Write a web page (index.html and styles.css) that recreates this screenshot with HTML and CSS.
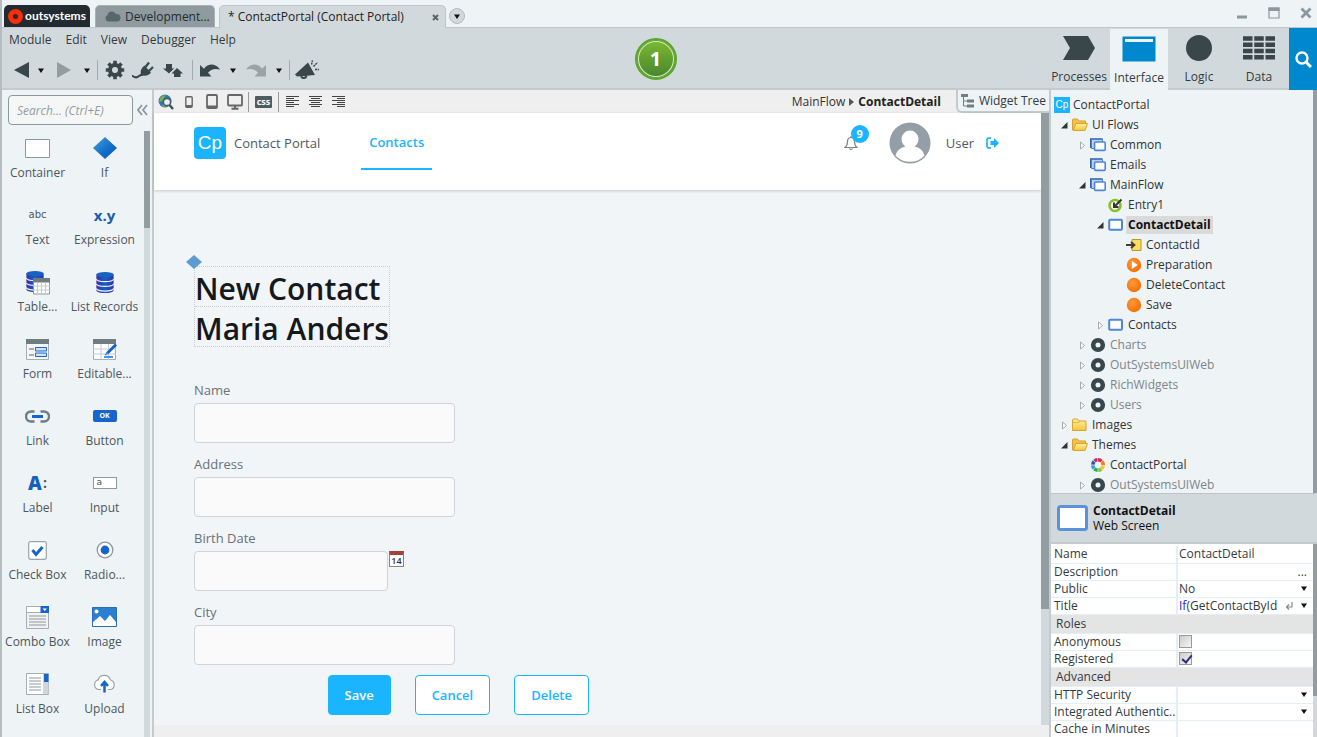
FILE: index.html
```html
<!DOCTYPE html>
<html lang="en">
<head>
<meta charset="utf-8">
<title>ContactPortal (Contact Portal)</title>
<link rel="stylesheet" href="styles.css">
</head>
<body>
<svg class="defs" width="0" height="0" aria-hidden="true">
  <defs>
    <linearGradient id="gBlue" x1="0" y1="0" x2="1" y2="1"><stop offset="0" stop-color="#4aa0e0"/><stop offset=".6" stop-color="#0f6cc8"/><stop offset="1" stop-color="#0a5fc0"/></linearGradient>
    <linearGradient id="gDb" x1="0" y1="0" x2="1" y2="0"><stop offset="0" stop-color="#3b2ea6"/><stop offset=".5" stop-color="#1560c4"/><stop offset="1" stop-color="#3b2ea6"/></linearGradient>
    <linearGradient id="gFold" x1="0" y1="0" x2="0" y2="1"><stop offset="0" stop-color="#fff0a0"/><stop offset="1" stop-color="#f3c63c"/></linearGradient>
    <radialGradient id="gOrange" cx=".4" cy=".35" r=".7"><stop offset="0" stop-color="#ff9a3c"/><stop offset="1" stop-color="#f26c00"/></radialGradient>
    <symbol id="open" viewBox="0 0 7 7"><path d="M6.5 0v6.500H0z" fill="#333"/></symbol>
    <symbol id="closed" viewBox="0 0 7 9"><path d="M1.500 1v7l4-3.500z" fill="#fff" stroke="#a8a8a8"/></symbol>
    <symbol id="folder-open" viewBox="0 0 16 16"><path d="M.5 13V3q0-1 1-1h4l1 2h7v3" fill="#f2c14a" stroke="#d9a02a"/><path d="M1 13.500L4 6.500h11.500L13 13.500z" fill="url(#gFold)" stroke="#dba32a"/></symbol>
    <symbol id="folder" viewBox="0 0 16 16"><path d="M.5 13.500V3q0-1 1-1h4l1 2h7.500v9.500z" fill="url(#gFold)" stroke="#dba32a"/><path d="M1 5.500h6l1-1.500" fill="none" stroke="#e5b84a"/></symbol>
    <symbol id="flow" viewBox="0 0 16 16"><path d="M1 11V2.200h11.500" fill="none" stroke="#2f62a8" stroke-width="2"/><path d="M1.500 2.500h11v9h-11z" fill="#b9d0ee" stroke="#4a80c8"/><rect x="4.600" y="5" width="10.600" height="8.400" rx="1" fill="#fff" stroke="#4f87d6" stroke-width="1.600"/></symbol>
    <symbol id="screen" viewBox="0 0 16 16"><rect x="1.200" y="2.800" width="12.800" height="10" rx="1" fill="#fff" stroke="#4f87d6" stroke-width="2"/></symbol>
    <symbol id="entry" viewBox="0 0 16 16"><circle cx="7" cy="8.500" r="5.500" fill="#fff" stroke="#84bf2c" stroke-width="2.600"/><path d="M13.500 2.500L7 9M6 5.500v4.500h4.500" fill="none" stroke="#333" stroke-width="2"/></symbol>
    <symbol id="param" viewBox="0 0 16 16"><path d="M6 2.500h9v11H6z" fill="#fbdc62" stroke="#b7972f"/><path d="M0 8h8M5 5L8.500 8 5 11" fill="none" stroke="#4a3a2a" stroke-width="1.800"/></symbol>
    <symbol id="action" viewBox="0 0 16 16"><circle cx="8" cy="8" r="7.200" fill="url(#gOrange)"/></symbol>
    <symbol id="prep" viewBox="0 0 16 16"><circle cx="8" cy="8" r="7.200" fill="url(#gOrange)"/><path d="M5.800 4v8l6-4z" fill="#fff"/></symbol>
    <symbol id="module" viewBox="0 0 16 16"><circle cx="8" cy="8" r="4.800" fill="#eef3f5" stroke="#37474b" stroke-width="4.600"/></symbol>
    <symbol id="theme" viewBox="0 0 16 16"><g fill="none" stroke-width="3.600"><path d="M8 2.800a5.200 5.200 0 0 1 3.600 1.500" stroke="#d6324a"/><path d="M12 4.700A5.200 5.200 0 0 1 13.200 8" stroke="#f07c1c"/><path d="M13.200 8.600A5.200 5.200 0 0 1 11.600 11.700" stroke="#f4c81c"/><path d="M11.200 12A5.200 5.200 0 0 1 8.200 13.200" stroke="#8bc53f"/><path d="M7.600 13.200A5.200 5.200 0 0 1 4.400 11.800" stroke="#2ca54a"/><path d="M4 11.300A5.200 5.200 0 0 1 2.800 8.300" stroke="#2b9fd8"/><path d="M2.800 7.700A5.200 5.200 0 0 1 4.100 4.500" stroke="#3c4fb4"/><path d="M4.500 4.100A5.200 5.200 0 0 1 7.500 2.800" stroke="#c02a6c"/></g></symbol>
    <symbol id="down" viewBox="0 0 6 5"><path d="M0 .5h6L3 5z" fill="#111"/></symbol>
    <symbol id="db" viewBox="0 0 20 24"><path d="M1 3.500v16.500c0 1.800 4 3 9 3s9-1.200 9-3V3.500z" fill="url(#gDb)"/><ellipse cx="10" cy="3.800" rx="9" ry="2.800" fill="#1762c2"/><path d="M1 8.500c1 3.500 17 3.500 18 0M1 13.500c1 3.500 17 3.500 18 0M1 18.300c1 3.500 17 3.500 18 0" stroke="#eef3f5" stroke-width="1.300" fill="none"/></symbol>
  </defs>
</svg>

<div class="app">
  <header class="titlebar">
    <div class="tab brand">
      <svg width="15" height="15" viewBox="0 0 15 15"><circle cx="7.500" cy="7.500" r="5" fill="#222b2f" stroke="#fb2c0a" stroke-width="5"/></svg>
      <span>outsystems</span>
    </div>
    <button class="tab env"><svg width="17" height="11" viewBox="0 0 17 11"><path d="M4 10.500a3.500 3.500 0 0 1-.5-6.500 4.500 4.500 0 0 1 8.500-.8 3.700 3.700 0 0 1 1.500 7.300z" fill="#58676c"/></svg><span>Development...</span></button>
    <div class="tab current"><span>* ContactPortal (Contact Portal)</span>
      <button class="close" aria-label="Close tab"><svg width="7" height="7" viewBox="0 0 7 7"><path d="M1 1l5 5M6 1L1 6" stroke="#5a6468" stroke-width="2"/></svg></button></div>
    <button class="tab-list" aria-label="Open tabs"><svg width="6" height="5"><use href="#down"/></svg></button>
    <div class="window-buttons">
      <button aria-label="Minimize"><svg width="12" height="12" viewBox="0 0 12 12"><path d="M1 8.500h10v3H1z" fill="#8b989d"/></svg></button>
      <button aria-label="Maximize"><svg width="12" height="12" viewBox="0 0 12 12"><path d="M1 1h10v10H1z" fill="none" stroke="#8b989d" stroke-width="1.200"/><path d="M.5.5h11V4H.5z" fill="#8b989d"/></svg></button>
      <button aria-label="Close"><svg width="12" height="12" viewBox="0 0 12 12"><path d="M1.500 1.500l9 9M10.500 1.500l-9 9" stroke="#8b989d" stroke-width="2.800"/></svg></button>
    </div>
  </header>

  <div class="ribbon">
    <div class="commands">
      <nav class="menu"><button>Module</button><button>Edit</button><button>View</button><button>Debugger</button><button>Help</button></nav>
      <div class="tools">
        <button class="wide" aria-label="Back"><svg width="16" height="18" viewBox="0 0 16 18"><path d="M15 1v16L0 9z" fill="#39474b"/></svg></button>
        <button class="drop" aria-label="Back history"><svg width="6" height="5"><use href="#down"/></svg></button>
        <button class="wide" aria-label="Forward"><svg width="16" height="18" viewBox="0 0 16 18"><path d="M1 1v16l14-8z" fill="#939c9e"/></svg></button>
        <button class="drop" aria-label="Forward history"><svg width="6" height="5"><use href="#down"/></svg></button>
        <i class="sep"></i>
        <button class="wide" aria-label="Settings"><svg width="20" height="20" viewBox="0 0 20 20"><circle cx="10" cy="10" r="5" fill="none" stroke="#39474b" stroke-width="4"/><path d="M10 .8v4M10 15.200v4M.8 10h4M15.200 10h4M3.500 3.500l3 3M13.500 13.500l3 3M16.500 3.500l-3 3M6.500 13.500l-3 3" stroke="#39474b" stroke-width="3.600"/></svg></button>
        <button class="wide" aria-label="Connect"><svg width="22" height="18" viewBox="0 0 22 18"><path d="M0 14.500q4 3.500 7 .5 2-1.500 4-1" fill="none" stroke="#39474b" stroke-width="2"/><path d="M9 14Q7.500 8 12.500 4.500L19 11.500Q15 16.500 9 14z" fill="#39474b"/><path d="M13.500 6l3.500-4.500M17 10l4-4" stroke="#39474b" stroke-width="2.200"/></svg></button>
        <button class="wide" aria-label="Dependencies"><svg width="20" height="15" viewBox="0 0 20 15"><path d="M3 1h6v4.500h2.500L6 10.500 0 5.500h3zM11 14V10.500H8.500L14 5l6 5.500h-2.500V14z" fill="#39474b"/><path d="M12.200 5.200L6 11" stroke="#d2d9dc"/></svg></button>
        <i class="sep"></i>
        <button class="wide" aria-label="Undo"><svg width="22" height="14" viewBox="0 0 22 14"><path d="M1 2v11.500h11.500L9 9.800Q13 4.500 21 6.500 17.500 1.500 12 1.500 7.500 1.800 5 5.800z" fill="#39474b"/></svg></button>
        <button class="drop" aria-label="Undo history"><svg width="6" height="5"><use href="#down"/></svg></button>
        <button class="wide" aria-label="Redo"><svg width="22" height="14" viewBox="0 0 22 14"><path d="M21 2v11.500H9.500L13 9.800Q9 4.500 1 6.500 4.500 1.500 10 1.500q4.500.3 7 4.300z" fill="#9ba3a5"/></svg></button>
        <button class="drop" aria-label="Redo history"><svg width="6" height="5"><use href="#down"/></svg></button>
        <i class="sep"></i>
        <button class="wide" aria-label="Announcements"><svg width="24" height="20" viewBox="0 0 24 20"><path d="M0 14.500L13 2.500l7 12.500-18 1.500zM5 16q1 3.500 4 3 3 0 3.500-3.500l-2 .3q-1 2-3.500.4z" fill="#39474b"/><path d="M16.500 4.500l1-4M18.500 6.500l4-4M20 9.500h4" stroke="#39474b" stroke-width="1.500" stroke-dasharray="2 .7"/></svg></button>
      </div>
    </div>
    <button class="publish" aria-label="1-Click Publish">1</button>
    <nav class="layers">
      <button><svg width="34" height="26" viewBox="0 0 34 26"><path d="M1 1h25l7 12-7 12H1l7-12z" fill="#39464a"/></svg><span>Processes</span></button>
      <button class="on"><svg width="34" height="26" viewBox="0 0 34 26"><path d="M.5.500h33v25H.500z" fill="#0088cf"/><path d="M3 3h28v3H3z" fill="#eef3f6"/></svg><span>Interface</span></button>
      <button><svg width="34" height="26" viewBox="0 0 34 26"><circle cx="17" cy="13" r="13" fill="#39464a"/></svg><span>Logic</span></button>
      <button><svg width="34" height="26" viewBox="0 0 34 26"><path d="M1 3.500h32M1 9.800h32M1 16h32M1 22.300h32" stroke="#39464a" stroke-width="4.400" stroke-dasharray="9.500 1.750"/></svg><span>Data</span></button>
      <button class="find" aria-label="Search"><svg width="17" height="17" viewBox="0 0 17 17"><circle cx="7" cy="7" r="5.500" fill="none" stroke="#fff" stroke-width="2.400"/><path d="M11 11l5 5" stroke="#fff" stroke-width="3"/></svg></button>
    </nav>
  </div>

  <main class="workspace">
    <aside class="toolbox">
      <div class="toolbox-search"><input type="text" placeholder="Search... (Ctrl+E)" aria-label="Search widgets"><button aria-label="Collapse"><svg width="11" height="12" viewBox="0 0 11 12"><path d="M5 1L1 6l4 5M10 1L6 6l4 5" fill="none" stroke="#8b989d" stroke-width="1.800"/></svg></button></div>
      <div class="toolbox-body">
        <div class="widgets">
          <button><span class="pic"><svg width="25" height="19" viewBox="0 0 25 19"><path d="M.5.500h24v18H.5z" fill="#fff" stroke="#8b989d"/></svg></span>Container</button>
          <button><span class="pic"><svg width="24" height="22" viewBox="0 0 24 22"><path d="M12 0l12 11-12 11L0 11z" fill="url(#gBlue)"/></svg></span>If</button>
          <button><span class="pic abc">abc</span>Text</button>
          <button><span class="pic xy">x.y</span>Expression</button>
          <button><span class="pic"><svg width="25" height="25" viewBox="0 0 25 25"><use href="#db" width="20" height="23"/><path d="M8.500 8.500h16v15.500h-16z" fill="#fff" stroke="#8b989d"/><path d="M8 8h17v4.500H8z" fill="#6f7d82"/><path d="M8 16h17M8 20h17M12.500 12v12M16.500 12v12M20.500 12v12" stroke="#c4cbce"/></svg></span>Table...</button>
          <button><span class="pic"><svg width="20" height="23"><use href="#db"/></svg></span>List Records</button>
          <button><span class="pic"><svg width="23" height="21" viewBox="0 0 23 21"><path d="M.5.500h22v20H.5z" fill="#f6f6f6" stroke="#a5aeb1"/><path d="M0 0h23v5H0z" fill="#6f7d82"/><path d="M3 10h5M3 16h5" stroke="#8b989d" stroke-width="1.500"/><path d="M9.500 8.500h11v3.500h-11zM9.500 14h11v3.500h-11z" fill="#cfe2f8" stroke="#1c66c8"/></svg></span>Form</button>
          <button><span class="pic"><svg width="24" height="21" viewBox="0 0 24 21"><path d="M.5.500h22v20H.5z" fill="#fff" stroke="#a5aeb1"/><path d="M0 0h23v5H0z" fill="#6f7d82"/><path d="M0 10h23M0 15h23M8 5v16M15.500 5v16" stroke="#c4cbce"/><path d="M23 5.500l-9 9" stroke="#1560c4" stroke-width="2.800"/><path d="M11 18h9M12 16l3-2" stroke="#4d93e6" stroke-width="1.800"/></svg></span>Editable...</button>
          <button><span class="pic"><svg width="25" height="13" viewBox="0 0 25 13"><path d="M9.500 1.500H6a5 5 0 0 0 0 10h3.500M15.500 1.500H19a5 5 0 0 1 0 10h-3.500" fill="none" stroke="#6f7d82" stroke-width="2.400"/><path d="M7 6.500h11" stroke="#1664cc" stroke-width="3"/></svg></span>Link</button>
          <button><span class="pic"><span class="ok">OK</span></span>Button</button>
          <button><span class="pic lbl"><b>A</b>:</span>Label</button>
          <button><span class="pic"><span class="inp">a</span></span>Input</button>
          <button><span class="pic"><svg width="19" height="19" viewBox="0 0 19 19"><rect x=".7" y=".7" width="17.600" height="17.600" rx="2" fill="#fff" stroke="#9aa5a9" stroke-width="1.200"/><path d="M4.500 9l3.500 4.500L14.500 6" fill="none" stroke="#1664cc" stroke-width="3"/></svg></span>Check Box</button>
          <button><span class="pic"><svg width="18" height="18" viewBox="0 0 18 18"><circle cx="9" cy="9" r="7.800" fill="#fff" stroke="#8b989d" stroke-width="1.300"/><circle cx="9" cy="9" r="4.400" fill="#1664cc"/></svg></span>Radio...</button>
          <button><span class="pic"><svg width="23" height="23" viewBox="0 0 23 23"><path d="M.5.500h22v6H.5z" fill="#fff" stroke="#a5aeb1"/><path d="M.5 6.500h22v16H.5z" fill="#f2f2f2" stroke="#a5aeb1"/><path d="M14.500 0H23v7h-8.500z" fill="#1664cc"/><path d="M16.500 2.500h4.500l-2.200 2.500z" fill="#fff"/><path d="M3 10h17M3 13h17M3 16h17M3 19h17" stroke="#8b989d" stroke-width="1.200"/></svg></span>Combo Box</button>
          <button><span class="pic"><svg width="25" height="20" viewBox="0 0 25 20"><path d="M.5.500h24v19H.5z" fill="#2b7fd0" stroke="#2b6cb4"/><path d="M1 15l7-6 5 5 5-6 6 7v4H1z" fill="#fff"/><circle cx="4.500" cy="4.500" r="2" fill="#fff"/></svg></span>Image</button>
          <button><span class="pic"><svg width="23" height="22" viewBox="0 0 23 22"><path d="M.5.500h22v21H.5z" fill="#fff" stroke="#a5aeb1"/><path d="M17 1h5.500v20H17z" fill="#d0d7da"/><path d="M18 1h4.500v8H18z" fill="#1664cc"/><path d="M3 5h12M3 8h12M3 11h12M3 14h12M3 17h12" stroke="#8b989d" stroke-width="1.200"/></svg></span>List Box</button>
          <button><span class="pic"><svg width="25" height="20" viewBox="0 0 25 20"><path d="M9 15.500H6a5 5 0 0 1 0-9.500 6.500 6.500 0 0 1 12.500 0A5 5 0 0 1 19 15.500h-3" fill="#fff" stroke="#9aa5a9" stroke-width="1.200"/><path d="M12.500 18.500v-9M9 12l3.500-4L16 12" fill="none" stroke="#1664cc" stroke-width="2.500"/></svg></span>Upload</button>
        </div>
        <div class="scroll"><i class="thumb-short"></i></div>
      </div>
    </aside>

    <section class="editor">
      <div class="editor-bar">
        <button aria-label="Preview"><svg width="16" height="16" viewBox="0 0 16 16"><circle cx="7" cy="7" r="6.500" fill="#2f78b4"/><path d="M2 4q3-3.500 6-3L6 4 4 7 1 8zM5 10l3 3-1 .5-3-2z" fill="#79b04c"/><circle cx="9" cy="8" r="3.600" fill="#e8f2f6" stroke="#4c5a5f" stroke-width="1.500"/><path d="M11.500 11l3.500 4" stroke="#3f4c50" stroke-width="2.400"/></svg></button>
        <button aria-label="Phone"><svg width="8" height="12" viewBox="0 0 8 12"><rect x=".8" y=".8" width="6.400" height="10.400" rx="1" fill="none" stroke="#666" stroke-width="1.400"/><path d="M1 10h6" stroke="#666" stroke-width="2"/></svg></button>
        <button aria-label="Tablet"><svg width="12" height="15" viewBox="0 0 12 15"><rect x="1" y="1" width="10" height="13" rx="1" fill="none" stroke="#666" stroke-width="1.800"/><path d="M1 12.500h10" stroke="#666" stroke-width="2"/></svg></button>
        <button aria-label="Desktop"><svg width="16" height="16" viewBox="0 0 16 16"><rect x="1" y="1" width="14" height="10.500" rx="1" fill="none" stroke="#666" stroke-width="1.800"/><path d="M8 12v2M4.500 14.800h7" stroke="#666" stroke-width="2"/></svg></button>
        <i class="rule"></i>
        <button class="css">css</button>
        <i class="rule"></i>
        <button aria-label="Align left"><svg width="13" height="12" viewBox="0 0 13 12"><path d="M0 .5h13M0 2.500h8M0 4.500h13M0 6.500h8M0 8.500h13M0 10.500h8" stroke="#444"/></svg></button>
        <button aria-label="Align center"><svg width="13" height="12" viewBox="0 0 13 12"><path d="M0 .5h13M2 2.500h9M0 4.500h13M2 6.500h9M0 8.500h13M2 10.500h9" stroke="#444"/></svg></button>
        <button aria-label="Align right"><svg width="13" height="12" viewBox="0 0 13 12"><path d="M0 .5h13M5 2.500h8M0 4.500h13M5 6.500h8M0 8.500h13M5 10.500h8" stroke="#444"/></svg></button>
        <div class="crumbs"><a href="#">MainFlow</a><svg width="5" height="8" viewBox="0 0 5 8"><path d="M0 0v8l5-4z" fill="#555"/></svg><b>ContactDetail</b></div>
        <button class="tree-toggle"><svg width="14" height="14" viewBox="0 0 14 14"><path d="M0 0h7v3H0zM6 5.500h7v3H6zM6 10.500h7v3H6z" fill="#6f8083"/><path d="M2.500 3v9H6M2.500 7H6" fill="none" stroke="#6f8083"/></svg>Widget Tree</button>
      </div>
      <div class="stage">
        <div class="page">
          <header class="page-head">
            <div class="logo">Cp</div><a class="app-name" href="#">Contact Portal</a>
            <a class="nav-on" href="#">Contacts</a>
            <div class="user">
              <button class="bell" aria-label="Notifications"><svg width="14" height="16" viewBox="0 0 14 16"><path d="M1 12.500q2.500-2 2.500-6Q3.500 2.500 7 2.500t3.500 4q0 4 2.500 6zM7 1v1.500M5.500 13.500q1.500 2 3 0" fill="none" stroke="#7d878d" stroke-width="1.200"/></svg><span class="count">9</span></button>
              <svg class="avatar" width="42" height="42" viewBox="0 0 42 42"><circle cx="21" cy="21" r="20.500" fill="#949ea6"/><path d="M6.500 33.500Q8 26.500 16.500 24.500q-4-3-4-7.500a8.500 8.500 0 0 1 17 0q0 4.500-4 7.500 8.500 2 10 9Q30 39.800 21 39.800T6.500 33.500z" fill="#fff"/></svg>
              <a href="#">User</a>
              <button aria-label="Log out"><svg width="13" height="12" viewBox="0 0 13 12"><path d="M5 1.200H2.500Q1 1.200 1 3v6q0 1.800 1.500 1.800H5" fill="none" stroke="#1bb4ff" stroke-width="1.700"/><path d="M4.500 4H8V1l5 5-5 5V8H4.500z" fill="#1bb4ff"/></svg></button>
            </div>
          </header>
          <div class="page-body">
            <div class="title"><svg class="if-mark" width="16" height="14" viewBox="0 0 16 14"><path d="M8 0l8 7-8 7-8-7z" fill="#5e9bd3"/></svg><h1>New Contact</h1><h1>Maria Anders</h1></div>
            <form>
              <div class="field"><label for="f-name">Name</label><input id="f-name" type="text"></div>
              <div class="field"><label for="f-address">Address</label><input id="f-address" type="text"></div>
              <div class="field"><label for="f-birth">Birth Date</label><div class="date"><input id="f-birth" type="text"><button type="button" class="cal" aria-label="Pick date">14</button></div></div>
              <div class="field"><label for="f-city">City</label><input id="f-city" type="text"></div>
              <div class="actions"><button type="button" class="primary">Save</button><button type="button">Cancel</button><button type="button">Delete</button></div>
            </form>
          </div>
        </div>
        <div class="scroll wide-scroll"><i class="thumb-long"></i></div>
      </div>
      <div class="editor-foot"></div>
    </section>

    <aside class="inspector">
      <div class="tree-wrap">
        <ul class="tree">
          <li class="root"><span class="cp">Cp</span>ContactPortal</li>
          <li><svg class="ar" width="7" height="7"><use href="#open"/></svg><svg class="ic"><use href="#folder-open"/></svg>UI Flows</li>
          <li class="l1"><svg class="ar" width="7" height="9"><use href="#closed"/></svg><svg class="ic"><use href="#flow"/></svg>Common</li>
          <li class="l1"><i class="ar"></i><svg class="ic"><use href="#flow"/></svg>Emails</li>
          <li class="l1"><svg class="ar" width="7" height="7"><use href="#open"/></svg><svg class="ic"><use href="#flow"/></svg>MainFlow</li>
          <li class="l2"><i class="ar"></i><svg class="ic"><use href="#entry"/></svg>Entry1</li>
          <li class="l2"><svg class="ar" width="7" height="7"><use href="#open"/></svg><svg class="ic"><use href="#screen"/></svg><b>ContactDetail</b></li>
          <li class="l3"><i class="ar"></i><svg class="ic"><use href="#param"/></svg>ContactId</li>
          <li class="l3"><i class="ar"></i><svg class="ic"><use href="#prep"/></svg>Preparation</li>
          <li class="l3"><i class="ar"></i><svg class="ic"><use href="#action"/></svg>DeleteContact</li>
          <li class="l3"><i class="ar"></i><svg class="ic"><use href="#action"/></svg>Save</li>
          <li class="l2"><svg class="ar" width="7" height="9"><use href="#closed"/></svg><svg class="ic"><use href="#screen"/></svg>Contacts</li>
          <li class="l1 ref"><svg class="ar" width="7" height="9"><use href="#closed"/></svg><svg class="ic"><use href="#module"/></svg>Charts</li>
          <li class="l1 ref"><svg class="ar" width="7" height="9"><use href="#closed"/></svg><svg class="ic"><use href="#module"/></svg>OutSystemsUIWeb</li>
          <li class="l1 ref"><svg class="ar" width="7" height="9"><use href="#closed"/></svg><svg class="ic"><use href="#module"/></svg>RichWidgets</li>
          <li class="l1 ref"><svg class="ar" width="7" height="9"><use href="#closed"/></svg><svg class="ic"><use href="#module"/></svg>Users</li>
          <li><svg class="ar" width="7" height="9"><use href="#closed"/></svg><svg class="ic"><use href="#folder"/></svg>Images</li>
          <li><svg class="ar" width="7" height="7"><use href="#open"/></svg><svg class="ic"><use href="#folder-open"/></svg>Themes</li>
          <li class="l1"><i class="ar"></i><svg class="ic"><use href="#theme"/></svg>ContactPortal</li>
          <li class="l1 ref"><svg class="ar" width="7" height="9"><use href="#closed"/></svg><svg class="ic"><use href="#module"/></svg>OutSystemsUIWeb</li>
        </ul>
        <div class="scroll thin full"></div>
      </div>
      <div class="selected">
        <svg width="31" height="26" viewBox="0 0 31 26"><rect x="1.500" y="1.500" width="28" height="23" rx="2" fill="#fff" stroke="#5b92dc" stroke-width="3"/></svg>
        <div><b>ContactDetail</b><span>Web Screen</span></div>
      </div>
      <div class="props">
        <div class="props-main">
        <table>
          <tr><th><label for="p-name">Name</label></th><td><input id="p-name" type="text" value="ContactDetail"></td></tr>
          <tr><th><label for="p-desc">Description</label></th><td><div class="cell"><input id="p-desc" type="text"><button aria-label="Edit description">...</button></div></td></tr>
          <tr><th><label for="p-public">Public</label></th><td><div class="cell"><select id="p-public"><option>No</option><option>Yes</option></select><svg width="6" height="5"><use href="#down"/></svg></div></td></tr>
          <tr><th>Title</th><td><button class="cell expr"><span><i>If</i>(GetContactById</span><svg width="8" height="8" viewBox="0 0 8 8"><path d="M7 0v5H2M4 2.500L1.500 5 4 7.500" fill="none" stroke="#888" stroke-width="1.200"/></svg><svg width="6" height="5"><use href="#down"/></svg></button></td></tr>
          <tr class="group"><th colspan="2">Roles</th></tr>
          <tr><th><label for="p-anon">Anonymous</label></th><td><input id="p-anon" type="checkbox"></td></tr>
          <tr><th><label for="p-reg">Registered</label></th><td><input id="p-reg" type="checkbox" checked></td></tr>
          <tr class="group"><th colspan="2">Advanced</th></tr>
          <tr><th><label for="p-http">HTTP Security</label></th><td><div class="cell"><select id="p-http"><option></option></select><svg width="6" height="5"><use href="#down"/></svg></div></td></tr>
          <tr><th><label for="p-auth">Integrated Authentic...</label></th><td><div class="cell"><select id="p-auth"><option></option></select><svg width="6" height="5"><use href="#down"/></svg></div></td></tr>
          <tr><th><label for="p-cache">Cache in Minutes</label></th><td><input id="p-cache" type="text"></td></tr>
        </table>
        </div>
        <div class="scroll thin"><i class="thumb-mid"></i></div>
      </div>
    </aside>
  </main>
</div>
</body>
</html>
```

FILE: styles.css
```css
* { box-sizing: border-box; }
html, body { height: 100%; margin: 0; }
body { font: 12px/16px "Open Sans", "Noto Sans", sans-serif; color: #333b3e; background: #eef3f6; overflow: hidden; }
button, input, select { font: inherit; color: inherit; margin: 0; padding: 0; border: 0; background: none; border-radius: 0; }
button { cursor: pointer; }
a { color: inherit; text-decoration: none; }
svg { display: block; flex: none; }
.defs { position: absolute; }

.app { display: flex; flex-direction: column; height: 100vh; border-left: 2px solid #b4bdc0; }

.titlebar { display: flex; align-items: flex-end; height: 28px; flex: none; padding-left: 2px; border-bottom: 1px solid #bfc7ca; }
.tab { display: flex; align-items: center; height: 22px; border-radius: 5px 5px 0 0; white-space: nowrap; }
.brand { width: 86px; padding-left: 4px; gap: 2px; background: #222b2f; color: #fff; font: 700 12px/16px Lato, sans-serif; margin-right: 5px; }
.env { width: 120px; padding-left: 8px; gap: 4px; background: #909b9f; color: #222b2f; border: 1px solid #a8b2b5; border-bottom: 0; margin-right: 4px; }
.current { width: 227px; height: 23px; padding: 0 6px 0 8px; justify-content: space-between; background: #d2d9dc; border: 1px solid #bcc4c8; border-bottom: 0; margin-bottom: -1px; color: #222; }
.tab-list { width: 16px; height: 16px; margin: 0 0 3px 3px; border: 1px solid #b4bcc0; border-radius: 50%; background: #d2d9dc; display: grid; place-items: center; }
.window-buttons { display: flex; gap: 20px; margin: 0 5px 8px auto; }

.ribbon { position: relative; display: flex; justify-content: space-between; height: 62px; flex: none; background: #d2d9dc; border-bottom: 2px solid #c3cbce; }
.commands { padding: 3px 0 0 7px; }
.menu { display: flex; gap: 14px; }
.menu button { line-height: 18px; }
.tools { display: flex; align-items: center; height: 42px; padding-left: 4px; }
.tools button { display: grid; place-items: center; height: 24px; }
.tools .wide { width: 30px; }
.tools .wide:first-child { width: 18px; }
.tools .drop { width: 20px; }
.tools .drop + .wide, .tools .sep + .wide { width: 26px; }
.sep { width: 1px; height: 20px; margin-right: 4px; background: #a2abae; }
.wide + .sep { margin-left: 4px; }
.publish { position: absolute; left: calc(50% - 25px); top: 10px; width: 42px; height: 42px; border-radius: 50%; border: 2px solid #5ba52c; background: linear-gradient(#7cba30, #47842f); box-shadow: inset 0 0 0 1px #5ba52c, inset 0 0 0 2px #d6e8c4; color: #fff; font-size: 20px; line-height: 36px; font-weight: 700; }
.layers { display: flex; margin-bottom: -2px; }
.layers button { display: flex; flex-direction: column; align-items: center; gap: 7px; width: 60px; padding: 7px 0 2px; }
.layers button span { line-height: 18px; }
.layers .on { background: #eef3f6; margin: 1px 1px 0; height: 61px; width: 58px; }
.layers .find { width: 28px; background: #0088cf; justify-content: center; padding: 0; }

.workspace { display: grid; grid-template-columns: 152px minmax(0, 1fr) 268px; flex: 1; min-height: 0; }

.toolbox { display: flex; flex-direction: column; min-height: 0; border-right: 2px solid #c3cbce; }
.toolbox-search { display: flex; align-items: center; gap: 4px; padding: 5px 0 5px 6px; }
.toolbox-search input { width: 125px; height: 30px; padding: 0 8px; border: 1px solid #8b989d; border-radius: 4px; background: #f5f7f7; }
.toolbox-search input::placeholder { color: #929da1; font-style: italic; opacity: 1; }
.toolbox-body { display: flex; flex: 1; min-height: 0; padding: 1px 2px 0 2px; }
.widgets { display: grid; grid-template-columns: 1fr 1fr; grid-auto-rows: 67px; width: 134px; color: #4c585c; overflow: hidden; }
.widgets button { display: flex; flex-direction: column; align-items: center; white-space: nowrap; min-width: 0; }
.pic { display: flex; align-items: center; justify-content: center; height: 34px; }
.abc { font: 10px/16px "DejaVu Sans", sans-serif; }
.xy { font-size: 15px; font-weight: 700; color: #1d5cab; }
.ok { width: 24px; height: 12px; border-radius: 2px; background: #1664cc; color: #fff; font-size: 7px; line-height: 12px; font-weight: 700; }
.lbl { font-size: 14px; font-weight: 700; gap: 1px; }
.lbl b { font-size: 19px; color: #1560c4; }
.inp { width: 24px; height: 12px; border: 1px solid #8b989d; background: #fff; font: 9px/9px "DejaVu Sans", sans-serif; text-align: left; padding-left: 3px; }

.scroll { width: 6px; margin-left: auto; background: #d2d9dc; }
.scroll i { display: block; background: #929da1; }
.thumb-short { height: 16%; }
.thumb-long { height: 81%; }
.thumb-mid { height: 79%; }
.wide-scroll { width: 8px; margin: 0; }
.thin { width: 4px; margin: 0; flex: none; }
.full { background: #929da1; }

.editor { display: flex; flex-direction: column; min-width: 0; }
.editor-bar { display: flex; align-items: center; height: 23px; flex: none; background: #efefef; }
.editor-bar button { display: grid; place-items: center; min-width: 23px; height: 22px; }
.editor-bar .css { height: 12px; min-width: 17px; margin: 0 4px; background: #4f5d62; border-radius: 1px; color: #fff; font-size: 9px; line-height: 10px; font-weight: 700; }
.rule { width: 1px; height: 20px; background: #999; margin: 0 2px; }
.crumbs { display: flex; align-items: center; gap: 4px; margin: 0 15px 0 auto; color: #333; }
.crumbs b { color: #222; }
.editor-bar .tree-toggle { display: flex; align-items: center; gap: 4px; align-self: flex-start; height: 23px; padding: 0 3px; background: #eef3f6; border: solid #c3cbce; border-width: 0 0 2px 2px; border-radius: 0 0 0 6px; }
.stage { display: flex; flex: 1; min-height: 0; }
.page { flex: 1; min-width: 0; background: #f1f5f8; }
.page-head { display: flex; align-items: center; height: 77px; padding: 0 42px 18px 40px; background: #fff; box-shadow: 0 1px 3px rgba(0, 0, 0, .18); color: #4f575e; font-size: 13px; }
.logo { width: 32px; height: 32px; border-radius: 4px; background: #1bb4ff; color: #fff; font: 19px/31px "Liberation Sans", sans-serif; text-align: center; margin-right: 8px; }
.nav-on { align-self: flex-start; height: 57px; margin-left: 41px; padding: 0 8px; line-height: 59px; border-bottom: 2px solid #1bb4ff; color: #1bb4ff; font-weight: 600; }
.user { display: flex; align-items: center; margin-left: auto; }
.bell { position: relative; margin-right: 31px; }
.count { position: absolute; left: 7px; top: -10px; width: 18px; height: 18px; border-radius: 50%; background: #1bb4ff; color: #fff; font-size: 11px; line-height: 18px; font-weight: 700; }
.avatar { margin-right: 15px; }
.user a { margin-right: 12px; }
.page-body { padding: 76px 40px 0; }
.title { position: relative; width: max-content; border: 1px dotted #c8cdd0; }
.title h1 { box-sizing: content-box; margin: 0; height: 39px; font-size: 30px; line-height: 44px; font-weight: 600; color: #16191c; }
.title h1 + h1 { border-top: 1px dotted #c8cdd0; }
.if-mark { position: absolute; left: -9px; top: -12px; }
form { padding-top: 32px; width: 395px; }
.field { margin-bottom: 10px; font-size: 13px; color: #6a7178; }
.field label { display: block; line-height: 22px; margin-bottom: 2px; }
.field input { width: 261px; height: 40px; padding: 0 12px; border: 1px solid #ced4da; border-radius: 4px; background: #fafafa; display: block; }
.field .date { display: flex; align-items: flex-start; gap: 1px; }
.field .date input { width: 194px; }
.cal { width: 15px; height: 16px; border: 1px solid #8c8480; border-top: 4px solid #a3423a; background: #fff; color: #333; font-size: 9px; line-height: 11px; font-weight: 600; }
.actions { display: flex; justify-content: flex-end; gap: 24px; }
.actions button { height: 40px; padding: 0 16px; border: 1px solid #1bb4ff; border-radius: 4px; background: #fff; color: #1bb4ff; font-size: 13px; font-weight: 600; }
.actions .primary { background: #1bb4ff; color: #fff; }
.editor-foot { height: 12px; flex: none; background: #efefef; }

.inspector { display: flex; flex-direction: column; min-height: 0; border-left: 2px solid #c3cbce; }
.tree-wrap { display: flex; height: 403px; }
.tree { flex: 1; margin: 0; padding: 5px 0 0 9px; list-style: none; overflow: hidden; color: #333; }
.tree li { display: flex; align-items: center; height: 20px; }
.tree .root { margin-left: -6px; }
.cp { width: 16px; height: 16px; margin-right: 3px; background: #1bb4ff; color: #fff; font: 10px/16px "Liberation Sans", sans-serif; text-align: center; }
.ar { width: 7px; margin: 0 4px 0 1px; flex: none; }
.ic { width: 16px; height: 16px; margin-right: 4px; }
.tree .l1 { padding-left: 18px; }
.tree .l2 { padding-left: 36px; }
.tree .l3 { padding-left: 54px; }
.tree .ref { color: #7d8587; }
.tree b { background: #dadada; color: #111; line-height: 18px; margin-left: -2px; padding: 0 2px; }
.selected { display: flex; align-items: center; gap: 5px; height: 51px; flex: none; padding-left: 6px; background: #d2d9dc; border-top: 1px solid #bcc4c8; border-bottom: 2px solid #c3cbce; color: #111; line-height: 15px; }
.selected b, .selected span { display: block; }
.props { display: flex; flex: 1; min-height: 0; overflow: hidden; background: #fff; }
.props-main { flex: 1; min-width: 0; padding-top: 2px; }
.props table { width: 100%; border-spacing: 0; border-collapse: collapse; table-layout: fixed; }
.props tr { height: 17px; }
.props th, .props td { padding: 0 0 0 3px; text-align: left; font-weight: 400; line-height: 16px; border-bottom: 1px solid #e2eff4; white-space: nowrap; }
.props th { width: 126px; overflow: hidden; }
.props td { border-left: 2px solid #e2eff4; padding-left: 1px; }
.props input[type="text"] { display: block; width: 100%; height: 16px; }
.props .group { height: 19px; }
.props .group th { background: #e4e4e4; line-height: 18px; padding-left: 5px; }
.cell { display: flex; align-items: center; width: 100%; height: 16px; padding-right: 6px; }
.cell select, .cell input { flex: 1; min-width: 0; height: 16px; appearance: none; }
.props .expr { gap: 8px; padding-right: 6px; }
.expr span { flex: 1; text-align: left; }
.expr i { font-style: normal; color: #2424e8; }
.props input[type="checkbox"] { appearance: none; display: block; width: 13px; height: 13px; border: 1px solid #999; background: linear-gradient(135deg, #ccc, #f6f6f6); }
.props input[type="checkbox"]:checked::after { content: ""; display: block; width: 4px; height: 8px; margin: 0 0 0 4px; border: solid #2c2c80; border-width: 0 2px 2px 0; transform: rotate(40deg); }
```
